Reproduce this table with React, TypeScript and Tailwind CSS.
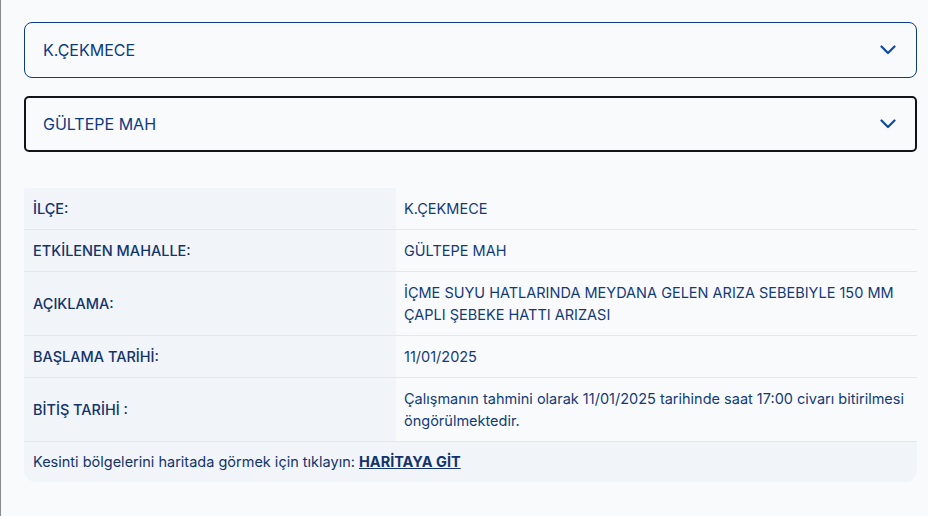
import React from "react";

const rows: { label: string; value: string }[] = [
    { label: "İLÇE:", value: "K.ÇEKMECE" },
    { label: "ETKİLENEN MAHALLE:", value: "GÜLTEPE MAH" },
    { label: "AÇIKLAMA:", value: "İÇME SUYU HATLARINDA MEYDANA GELEN ARIZA SEBEBIYLE 150 MM ÇAPLI ŞEBEKE HATTI ARIZASI" },
    { label: "BAŞLAMA TARİHİ:", value: "11/01/2025" },
    { label: "BİTİŞ TARİHİ :", value: "Çalışmanın tahmini olarak 11/01/2025 tarihinde saat 17:00 civarı bitirilmesi öngörülmektedir." },
];

const Chevron = () => (
    <svg width="16" height="10" viewBox="0 0 16 10" fill="none" stroke="#0d4a9c" strokeWidth="2.2" strokeLinecap="round" strokeLinejoin="round">
        <path d="M1.5 1.5L8 8l6.5-6.5" />
    </svg>
);

const SelectBox: React.FC<{ value: string; active?: boolean }> = ({ value, active }) => (
    <div
        className={
            active
                ? "flex h-14 items-center justify-between rounded-[5px] border-2 border-[#111318] bg-[#f9fafc] pl-[17px] pr-[19px]"
                : "flex h-14 items-center justify-between rounded-lg border border-[#0d3b85] bg-[#f9fafc] pl-[18px] pr-[20px]"
        }
    >
        <span className="text-[16px] text-[#0b3a82]">{value}</span>
        <Chevron />
    </div>
);

export default function App() {
    return (
        <div className="min-h-[516px] w-[928px] border-l border-[#8a8a8a] bg-[#f9fafc] pl-[23px] pr-[11px] pt-[22px] font-['Inter',sans-serif]">
            <div className="flex flex-col gap-[18px]">
                <SelectBox value="K.ÇEKMECE" />
                <SelectBox value="GÜLTEPE MAH" active />
            </div>
            <div className="mt-9 overflow-hidden rounded-b-xl rounded-t-sm bg-[#f1f5fa] text-[14.5px] leading-[22px]">
                {rows.map((r) => (
                    <div key={r.label} className="flex border-b border-[#e3e8ee]">
                        <div className="flex w-[372px] shrink-0 items-center bg-[#f1f5fa] px-[9px] py-[9.5px] font-medium text-[#13336b]">
                            {r.label}
                        </div>
                        <div className="flex flex-1 items-center bg-[#f9fafc] py-[9.5px] pl-[8px] pr-[8px] text-[#133a78]">
                            {r.value}
                        </div>
                    </div>
                ))}
                <div className="px-[9px] py-[9px] text-[#13336b]">
                    Kesinti bölgelerini haritada görmek için tıklayın:{" "}
                    <a href="#" className="font-bold underline">
                        HARİTAYA GİT
                    </a>
                </div>
            </div>
        </div>
    );
}
